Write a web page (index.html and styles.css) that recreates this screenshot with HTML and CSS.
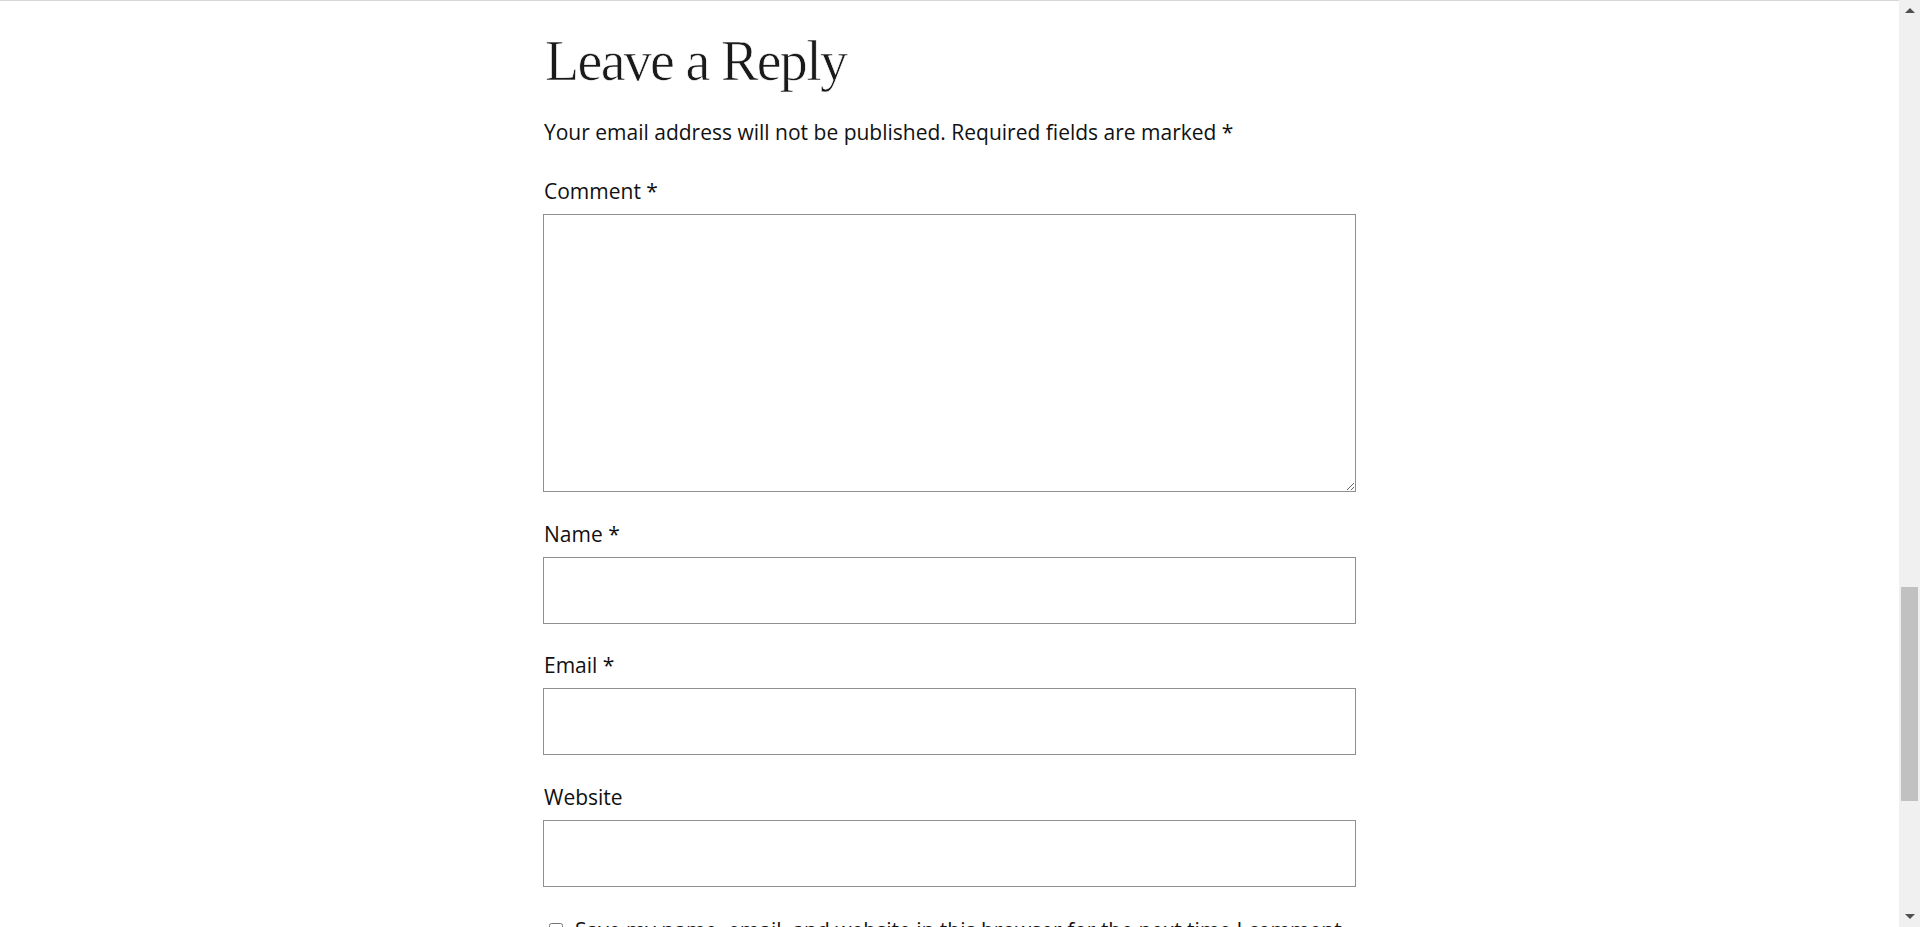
FILE: index.html
```html
<!DOCTYPE html>
<html lang="en">
<head>
<meta charset="utf-8">
<title>Leave a Reply</title>
<link rel="stylesheet" href="styles.css">
</head>
<body>
<div class="topline"></div>
<main class="page">
  <section class="reply">
    <h2 class="reply-title">Leave a Reply</h2>
    <form class="comment-form">
      <p class="notes">Your email address will not be published. Required fields are marked *</p>
      <div class="field">
        <label class="label" for="comment">Comment *</label>
        <textarea id="comment" class="textarea"></textarea>
      </div>
      <div class="field">
        <label class="label" for="author">Name *</label>
        <input id="author" class="input" type="text">
      </div>
      <div class="field">
        <label class="label" for="email">Email *</label>
        <input id="email" class="input" type="text">
      </div>
      <div class="field">
        <label class="label" for="url">Website</label>
        <input id="url" class="input" type="text">
      </div>
      <div class="cookies">
        <input id="save" class="checkbox" type="checkbox">
        <label for="save" class="cookies-label">Save my name, email, and website in this browser for the next time I comment.</label>
      </div>
    </form>
  </section>
</main>
<div class="scrollbar">
  <div class="arrow arrow-up"></div>
  <div class="track"><div class="thumb"></div></div>
  <div class="arrow arrow-down"></div>
</div>
</body>
</html>
```

FILE: styles.css
```css
html, body {
  margin: 0;
  padding: 0;
  background: #ffffff;
  overflow: hidden;
  height: 100%;
}

body {
  font-family: "Open Sans", "Noto Sans", sans-serif;
  font-size: 21px;
  color: #111111;
}

.topline {
  height: 1px;
  background: #d6d6d6;
  margin-right: 21px;
}

.page {
  margin-right: 21px;
  display: flex;
  justify-content: center;
}

.reply {
  width: 813px;
  padding-top: 27px;
}

.reply-title {
  margin: 0;
  font-family: "Liberation Serif", "DejaVu Serif", serif;
  font-weight: 300;
  font-size: 56px;
  line-height: 67px;
  letter-spacing: -1.7px;
  color: #1a1a1a;
  -webkit-text-stroke: 0.7px #ffffff;
  padding-left: 2px;
}

.comment-form {
  display: flex;
  flex-direction: column;
}

.notes {
  margin: 21px 0 0 0;
  line-height: 32px;
  padding-left: 1px;
}

.field {
  display: flex;
  flex-direction: column;
  gap: 7px;
  margin-top: 27px;
}

.field + .field {
  margin-top: 25.5px;
}

.label {
  line-height: 32px;
  padding-left: 1px;
}

.textarea,
.input {
  display: block;
  box-sizing: border-box;
  width: 100%;
  margin: 0;
  border: 1px solid #8f8f8f;
  border-radius: 0;
  background: #ffffff;
  font: inherit;
  padding: 10px 16px;
}

.textarea {
  height: 278px;
  resize: vertical;
}

.input {
  height: 67px;
}

.cookies {
  display: flex;
  align-items: flex-start;
  gap: 12px;
  margin-top: 27px;
  padding-left: 6px;
  white-space: nowrap;
}

.checkbox {
  flex: none;
  width: 14px;
  height: 14px;
  margin: 9px 0 0 0;
}

.cookies-label {
  line-height: 32px;
}

.scrollbar {
  position: fixed;
  top: 0;
  right: 0;
  width: 21px;
  height: 100%;
  background: #f0f0f0;
  display: flex;
  flex-direction: column;
}

.track {
  flex: 1;
  position: relative;
}

.thumb {
  position: absolute;
  left: 2px;
  right: 2px;
  top: 566px;
  height: 214px;
  background: #c1c1c1;
}

.arrow {
  height: 21px;
  display: flex;
  align-items: center;
  justify-content: center;
}

.arrow-up::before {
  content: "";
  border-left: 5px solid transparent;
  border-right: 5px solid transparent;
  border-bottom: 5px solid #505050;
}

.arrow-down::before {
  content: "";
  border-left: 5px solid transparent;
  border-right: 5px solid transparent;
  border-top: 5px solid #505050;
}
```
